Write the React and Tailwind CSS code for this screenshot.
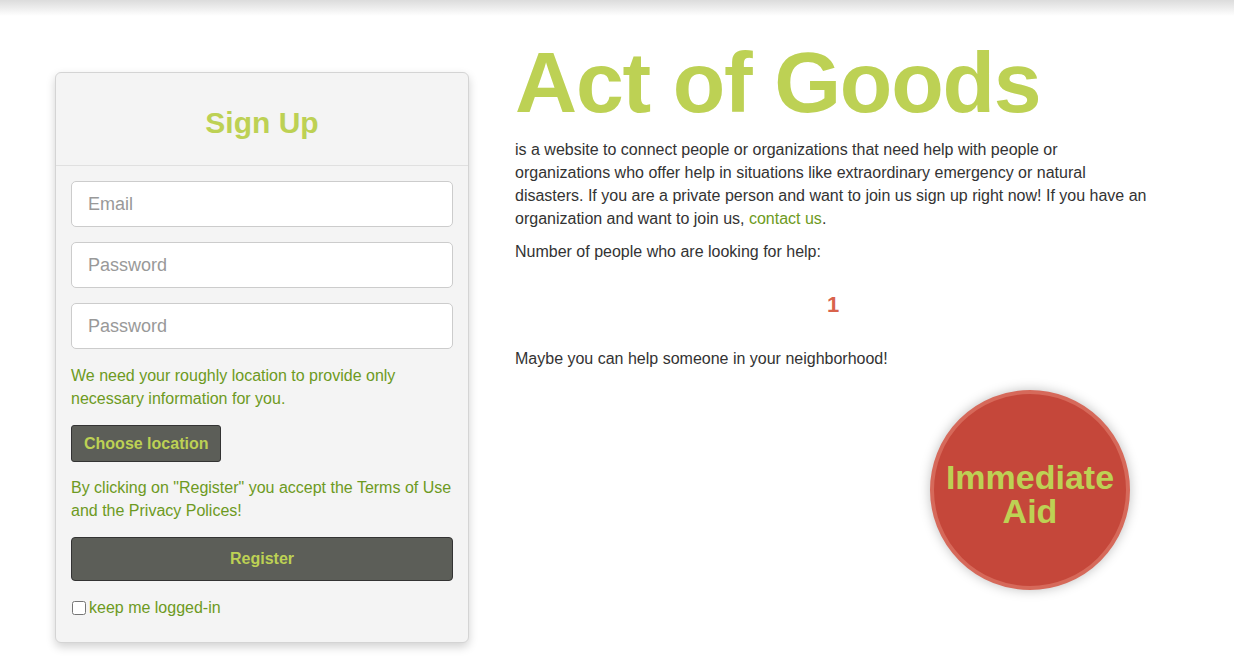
import { useState } from "react";

const font = "font-['Liberation_Sans',Arial,sans-serif]";

function SignUpCard() {
  const [keep, setKeep] = useState(false);

  return (
    <div className="w-[414px] shrink-0 rounded-md border border-[#d4d4d4] bg-[#f4f4f4] shadow-[0_4px_10px_rgba(0,0,0,0.18)]">
      <div className="border-b border-[#e0e0e0] h-[93px] flex items-center justify-center pt-[6px]">
        <h2 className="text-[30px] font-bold text-[#bdd154]">Sign Up</h2>
      </div>
      <form className="px-[15px] pt-[15px] pb-[22px]" onSubmit={(e) => e.preventDefault()}>
        <div className="flex flex-col gap-[15px]">
          <input
            type="email"
            placeholder="Email"
            className="h-[46px] w-full rounded-[5px] border border-[#ccc] bg-white px-4 text-[18px] placeholder:text-[#999] outline-none"
          />
          <input
            type="password"
            placeholder="Password"
            className="h-[46px] w-full rounded-[5px] border border-[#ccc] bg-white px-4 text-[18px] placeholder:text-[#999] outline-none"
          />
          <input
            type="password"
            placeholder="Password"
            className="h-[46px] w-full rounded-[5px] border border-[#ccc] bg-white px-4 text-[18px] placeholder:text-[#999] outline-none"
          />
        </div>
        <p className="mt-[15px] text-[16px] leading-[23px] text-[#6d9a22]">
          We need your roughly location to provide only necessary information for you.
        </p>
        <button
          type="button"
          className="mt-[15px] h-[37px] px-3 rounded-[3px] border border-[#333] bg-[#5c5e58] text-[16px] font-bold text-[#bdd154]"
        >
          Choose location
        </button>
        <p className="mt-[14px] text-[16px] leading-[23px] text-[#6d9a22]">
          By clicking on "Register" you accept the Terms of Use and the Privacy Polices!
        </p>
        <button
          type="submit"
          className="mt-[15px] h-[44px] w-full rounded-[4px] border border-[#333] bg-[#5c5e58] text-[16px] font-bold text-[#bdd154]"
        >
          Register
        </button>
        <label className="mt-[15px] flex items-center text-[16px] text-[#6d9a22]">
          <input
            type="checkbox"
            checked={keep}
            onChange={(e) => setKeep(e.target.checked)}
            className="mr-[3px] h-[14px] w-[14px] ml-[1px]"
          />
          keep me logged-in
        </label>
      </form>
    </div>
  );
}

export default function App() {
  return (
    <div className={`relative min-h-[658px] bg-white ${font} text-[#333]`}>
      <div className="absolute inset-x-0 top-0 h-[16px] bg-gradient-to-b from-[#dcdcdc] to-white" />
      <div className="relative flex gap-[46px] pl-[55px] pt-[72px]">
        <SignUpCard />
        <div className="w-[636px] -mt-[40px]">
          <h1 className="text-[86px] leading-[100px] font-bold text-[#bdd154] tracking-[-1.2px]">Act of Goods</h1>
          <p className="mt-[6px] text-[16px] leading-[23px]">
            is a website to connect people or organizations that need help with people or organizations who
            offer help in situations like extraordinary emergency or natural disasters. If you are a private person
            and want to join us sign up right now! If you have an organization and want to join us,{" "}
            <a href="#" className="text-[#6d9a22]">contact us</a>.
          </p>
          <p className="mt-[10px] text-[16px] leading-[23px]">Number of people who are looking for help:</p>
          <p className="mt-[25px] text-center text-[22px] font-bold text-[#d9634c]">1</p>
          <p className="mt-[26px] text-[16px] leading-[23px]">Maybe you can help someone in your neighborhood!</p>
          <div className="mt-[20px] flex justify-end pr-[21px]">
            <button
              type="button"
              className="h-[200px] w-[200px] rounded-full border-[4px] border-[#d6695a] bg-[#c5473a] pt-[8px] shadow-[0_0_12px_rgba(0,0,0,0.25)] text-[34px] leading-[34px] font-bold text-[#bdd154]"
            >
              Immediate
              <br />
              Aid
            </button>
          </div>
        </div>
      </div>
    </div>
  );
}
